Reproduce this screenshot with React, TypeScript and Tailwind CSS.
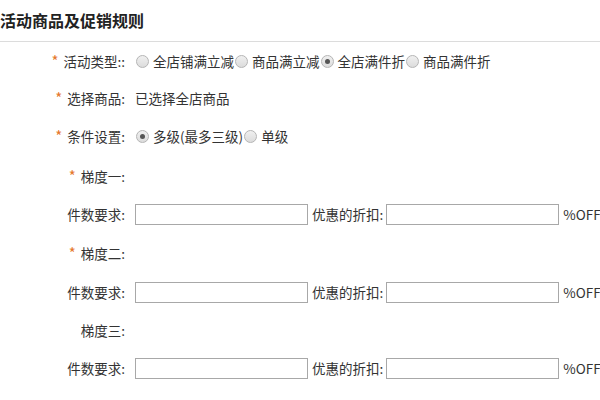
import React, { ReactNode } from 'react';

const font = { fontFamily: '"Microsoft YaHei", "Noto Sans CJK SC", "Noto Sans", sans-serif' };

type RadioProps = { checked?: boolean; children: ReactNode };

const Radio = ({ checked, children }: RadioProps) => (
  <span className="flex items-center">
    <span className="ml-[1px] flex h-[13px] w-[13px] items-center justify-center rounded-full border border-[#b5b5b5] bg-gradient-to-b from-[#f0f0f0] to-[#dcdcdc]">
      {checked && <span className="h-[5px] w-[5px] rounded-full bg-[#555]" />}
    </span>
    <span className="ml-[4px]">{children}</span>
  </span>
);

type RowProps = { label: string; required?: boolean; h: string; children?: ReactNode };

const Row = ({ label, required, h, children }: RowProps) => (
  <div className={`flex items-center whitespace-nowrap ${h}`}>
    <div className="w-[125px] shrink-0 text-right">
      {required && <span className="mr-[5px] text-[15px] text-[#e5772c]">*</span>}
      {label}
    </div>
    <div className="ml-[10px] flex shrink-0 items-center">{children}</div>
  </div>
);

const Field = () => <input className="h-[21px] w-[173px] shrink-0 border border-[#a8a8a8] bg-white outline-none" />;

const TierInputs = ({ h }: { h: string }) => (
  <Row label="件数要求:" h={h}>
    <Field />
    <span className="ml-[4px] mr-[3px]">优惠的折扣:</span>
    <Field />
    <span className="ml-[4px]">%OFF</span>
  </Row>
);

export default function App() {
  return (
    <div className="h-[400px] w-[600px] overflow-hidden bg-white text-[13.5px] text-[#333]" style={font}>
      <div className="flex h-[42px] items-center border-b border-[#dcdcdc] pb-[2px] text-[16px] font-bold text-[#222]">
        活动商品及促销规则
      </div>
      <Row label="活动类型::" required h="h-[38px]">
        <Radio>全店铺满立减</Radio>
        <Radio>商品满立减</Radio>
        <Radio checked>全店满件折</Radio>
        <Radio>商品满件折</Radio>
      </Row>
      <Row label="选择商品:" required h="h-[37px]">
        已选择全店商品
      </Row>
      <Row label="条件设置:" required h="h-[39px]">
        <Radio checked>多级(最多三级)</Radio>
        <Radio>单级</Radio>
      </Row>
      <Row label="梯度一:" required h="h-[40px]" />
      <TierInputs h="h-[37px]" />
      <Row label="梯度二:" required h="h-[40px]" />
      <TierInputs h="h-[38px]" />
      <Row label="梯度三:" h="h-[39px]" />
      <TierInputs h="h-[37px]" />
    </div>
  );
}
